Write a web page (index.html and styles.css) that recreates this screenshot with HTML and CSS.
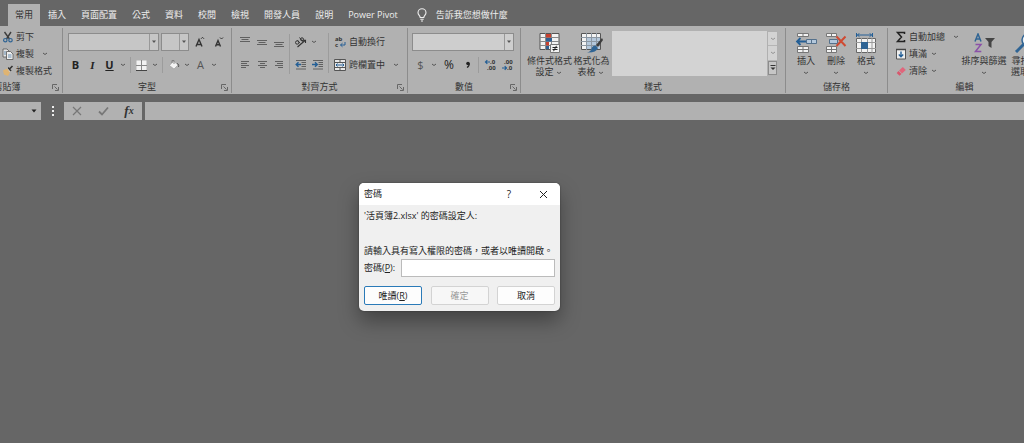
FILE: index.html
```html
<!DOCTYPE html>
<html lang="zh-Hant">
<head>
<meta charset="utf-8">
<title>密碼</title>
<link rel="stylesheet" href="styles.css">
</head>
<body>
<svg class="defs" aria-hidden="true">
  <symbol id="chev" viewBox="0 0 6 4"><path d="M1 1l2 1.500 2-1.500" fill="none" stroke="#555" stroke-width="1"/></symbol>
  <symbol id="tri" viewBox="0 0 6 4"><path d="M1 .5h4L3 3z" fill="#555"/></symbol>
  <symbol id="launch" viewBox="0 0 7 7"><path d="M.5 5V.5H5M2.500 2.500l3 3M6.500 3v3.500H3" fill="none" stroke="#666"/></symbol>
</svg>

<nav class="tabs">
  <button class="tab active">常用</button>
  <button class="tab">插入</button>
  <button class="tab">頁面配置</button>
  <button class="tab">公式</button>
  <button class="tab">資料</button>
  <button class="tab">校閱</button>
  <button class="tab">檢視</button>
  <button class="tab">開發人員</button>
  <button class="tab">說明</button>
  <button class="tab">Power Pivot</button>
  <button class="tab tell">
    <svg width="10" height="14" viewBox="0 0 10 14"><path d="M3.200 9.500C3.200 7.700 1 7 1 4.700a4 4 0 0 1 8 0C9 7 6.800 7.700 6.800 9.500zM3.300 11.300h3.400M4 13h2" fill="none" stroke="#eee" stroke-width="1.100"/></svg>
    告訴我您想做什麼
  </button>
</nav>

<div class="ribbon">
  <section class="group clipboard">
    <div class="body stack">
      <button class="cmd"><svg width="12" height="12" viewBox="0 0 12 12"><path d="M2.500 1l5 7M9 1L4.500 8" stroke="#3c3c3c" stroke-width="1.400" fill="none"/><circle cx="3.300" cy="9.200" r="1.700" fill="none" stroke="#2f6494" stroke-width="1.200"/><circle cx="8.500" cy="9.200" r="1.700" fill="none" stroke="#2f6494" stroke-width="1.200"/></svg>剪下</button>
      <button class="cmd"><svg width="12" height="12" viewBox="0 0 12 12"><path d="M1 1h4l2 2v6H1z" fill="#e4e4e4" stroke="#555" stroke-width=".8"/><path d="M4.500 3.500h4L11 6v5.500H4.500z" fill="#eee" stroke="#555" stroke-width=".8"/><path d="M6 7h3.500M6 9h3.500M2 4h2M2 6h2" stroke="#4475a0" stroke-width=".8"/></svg>複製<svg class="chev far"><use href="#chev"/></svg></button>
      <button class="cmd"><svg width="12" height="12" viewBox="0 0 12 12"><path d="M1 5.500l4-2 3 4-2 3.500-4-1.500z" fill="#dfb472"/><path d="M5 3l1.500-1L9 5.500 8 7z" fill="#eee"/><path d="M6 2.500l3 3.500M7.500 4l3-3" stroke="#333" stroke-width="1.600"/></svg>複製格式</button>
    </div>
    <footer><span>剪貼簿</span><button class="launch" aria-label="剪貼簿"><svg><use href="#launch"/></svg></button></footer>
  </section>

  <section class="group font">
    <div class="body rows">
      <div class="row top">
        <span class="combo wide"><select aria-label="字型"></select><svg><use href="#tri"/></svg></span>
        <span class="combo small"><select aria-label="字型大小"></select><svg><use href="#tri"/></svg></span>
        <button class="ico size" aria-label="放大字型"><svg width="12" height="12" viewBox="0 0 12 12"><path d="M1 10.500L4 3.500l3 7M2.200 8.500h3.600" fill="none" stroke="#333" stroke-width="1.400"/><path d="M6 2.800L7.500 1.300 9 2.800" fill="none" stroke="#333"/></svg></button>
        <button class="ico size" aria-label="縮小字型"><svg width="12" height="12" viewBox="0 0 12 12"><path d="M1.500 10.500L4 4.500l2.500 6M2.500 8.800h3" fill="none" stroke="#333" stroke-width="1.400"/><path d="M6 1.500L7.500 3 9 1.500" fill="none" stroke="#333"/></svg></button>
      </div>
      <div class="row">
        <button class="ico letter b">B</button><button class="ico letter i">I</button><button class="ico letter u">U</button><svg class="chev"><use href="#chev"/></svg>
        <i class="sep"></i>
        <button class="ico" aria-label="框線"><svg width="11" height="11" viewBox="0 0 11 11"><path d="M.5.500h10v10H.500z" fill="#f2f2f2"/><path d="M5.500 0v10M0 5.500h11" stroke="#888"/><path d="M0 10.500h11" stroke="#444"/></svg></button><svg class="chev"><use href="#chev"/></svg>
        <i class="sep"></i>
        <button class="ico" aria-label="填滿色彩"><svg width="12" height="12" viewBox="0 0 12 12"><path d="M5.500 2L10 6 6 10 1.500 6.500z" fill="#f4f4f4" stroke="#999" stroke-width=".6"/><path d="M4 4V1.500h2V5" fill="none" stroke="#777" stroke-width=".8"/><path d="M9 4.500c2 .5 2 2 1.500 3.500" fill="none" stroke="#555"/></svg></button><svg class="chev"><use href="#chev"/></svg>
        <button class="ico letter a">A</button><svg class="chev"><use href="#chev"/></svg>
      </div>
    </div>
    <footer><span>字型</span><button class="launch" aria-label="字型設定"><svg><use href="#launch"/></svg></button></footer>
  </section>

  <section class="group align">
    <div class="body cols">
      <div class="aligns">
        <button class="ico" aria-label="靠上對齊"><svg width="12" height="12" viewBox="0 0 12 12"><path d="M1 1.500h10M2.500 3.500h7M1 5.500h10" stroke="#606060"/></svg></button>
        <button class="ico" aria-label="置中對齊"><svg width="12" height="12" viewBox="0 0 12 12"><path d="M1 4.500h10M2.500 6.500h7M1 8.500h10" stroke="#606060"/></svg></button>
        <button class="ico" aria-label="靠下對齊"><svg width="12" height="12" viewBox="0 0 12 12"><path d="M1 6.500h10M2.500 8.500h7M1 10.500h10" stroke="#606060"/></svg></button>
        <button class="ico" aria-label="靠左對齊"><svg width="12" height="12" viewBox="0 0 12 12"><path d="M2 2.500h8M2 4.500h6M2 6.500h8M2 8.500h5" stroke="#606060"/></svg></button>
        <button class="ico" aria-label="置中"><svg width="12" height="12" viewBox="0 0 12 12"><path d="M2 2.500h9M4 4.500h5M2 6.500h9M4 8.500h5" stroke="#606060"/></svg></button>
        <button class="ico" aria-label="靠右對齊"><svg width="12" height="12" viewBox="0 0 12 12"><path d="M2 2.500h8M4 4.500h6M2 6.500h8M5 8.500h5" stroke="#606060"/></svg></button>
      </div>
      <div class="aligns orient">
        <button class="ico" aria-label="方向"><svg width="13" height="13" viewBox="0 0 13 13"><path d="M3.500 11L11 4.500M11.500 7V4.200H8.500" fill="none" stroke="#333" stroke-width="1.100"/><circle cx="3.200" cy="6.500" r="1.700" fill="none" stroke="#333"/><path d="M3.500 4.200L6 7.300M5.500 1.500L9 5.800" stroke="#333" fill="none"/><circle cx="8" cy="3.300" r="1.500" fill="none" stroke="#333"/></svg></button><svg class="chev"><use href="#chev"/></svg>
        <button class="ico" aria-label="減少縮排"><svg width="12" height="12" viewBox="0 0 12 12"><path d="M1 1.500h10M6.500 3.500H11M6.500 5.500H11M6.500 7.500H11M1 10h10" stroke="#606060"/><path d="M6 5.500H1.500M3.500 3.200L1.200 5.500l2.300 2.300" fill="none" stroke="#245f96" stroke-width="1.400"/></svg></button>
        <button class="ico" aria-label="增加縮排"><svg width="12" height="12" viewBox="0 0 12 12"><path d="M1 1.500h10M6.500 3.500H11M6.500 5.500H11M6.500 7.500H11M1 10h10" stroke="#606060"/><path d="M0 5.500h5M3 3.200l2.300 2.300L3 7.800" fill="none" stroke="#245f96" stroke-width="1.400"/></svg></button>
      </div>
      <div class="merge">
        <button class="cmd"><svg width="12" height="12" viewBox="0 0 12 12"><text x="1" y="5" class="mini">ab</text><text x="1" y="11" class="mini">c</text><path d="M11 6v3H6.500M8.500 7.200L6.500 9l2 1.800" fill="none" stroke="#245f96"/></svg>自動換行</button>
        <button class="cmd"><svg width="12" height="12" viewBox="0 0 12 12"><path d="M.5.500h11v11H.500z" fill="#e8e8e8" stroke="#555"/><path d="M6 0v3M6 9v3M0 3.500h12M0 8.500h12" stroke="#555"/><path d="M2 6h8M3.500 4.500L2 6l1.500 1.500M8.500 4.500L10 6 8.500 7.500" fill="none" stroke="#245f96"/></svg>跨欄置中<svg class="chev"><use href="#chev"/></svg></button>
      </div>
    </div>
    <footer><span>對齊方式</span><button class="launch" aria-label="對齊設定"><svg><use href="#launch"/></svg></button></footer>
  </section>

  <section class="group number">
    <div class="body rows">
      <div class="row top"><span class="combo full"><select aria-label="數值格式"></select><svg><use href="#tri"/></svg></span></div>
      <div class="row">
        <button class="ico letter money">$</button><svg class="chev"><use href="#chev"/></svg>
        <button class="ico letter pct">%</button><button class="ico letter comma" aria-label="千分位樣式"><svg width="6" height="8" viewBox="0 0 6 8"><circle cx="3" cy="2.500" r="1.800" fill="#222"/><path d="M4.200 2.500q.3 2.500-2.200 4" fill="none" stroke="#222" stroke-width="1.200"/></svg></button>
        <i class="sep"></i>
        <button class="ico" aria-label="增加小數位數"><svg width="12" height="12" viewBox="0 0 12 12"><text x="6" y="5" class="mini">.0</text><text x="3" y="11" class="mini">.00</text><path d="M6 3H1.500M3.300 1.200L1.500 3l1.800 1.800" fill="none" stroke="#245f96" stroke-width="1.200"/></svg></button>
        <button class="ico" aria-label="減少小數位數"><svg width="12" height="12" viewBox="0 0 12 12"><text x="3" y="5" class="mini">.00</text><text x="6" y="11" class="mini">.0</text><path d="M1 9h4.500M3.700 7.200L5.500 9l-1.800 1.800" fill="none" stroke="#245f96" stroke-width="1.200"/></svg></button>
      </div>
    </div>
    <footer><span>數值</span><button class="launch" aria-label="數值設定"><svg><use href="#launch"/></svg></button></footer>
  </section>

  <section class="group styles">
    <div class="body cols">
      <button class="big cond"><svg width="22" height="20" viewBox="0 0 22 20"><path d="M1 .5h19v16H1z" fill="#f2f2f2" stroke="#555"/><path d="M1 4.500h19M1 8.500h19M1 12.500h19M6.500 0v17M12.500 0v17" stroke="#888" fill="none"/><path d="M7 1h5v3.500H7z" fill="#c8402f"/><path d="M7 5h6v3.500H7z" fill="#2f5f91"/><path d="M7 9h3v3.500H7z" fill="#c8402f"/><path d="M7 13h3v3H7z" fill="#2f5f91"/><path d="M11.500 11.500h9v8h-9z" fill="#f2f2f2" stroke="#777"/><path d="M13.500 14.500h5M13.500 16.500h5M17.500 12.800l-3 5.400" stroke="#222"/></svg><span>條件式格式<br>設定<svg class="chev"><use href="#chev"/></svg></span></button>
      <button class="big table"><svg width="22" height="20" viewBox="0 0 22 20"><path d="M.5.500h19v16H.500z" fill="#f2f2f2" stroke="#555"/><path d="M6 5h13v11H6z" fill="#b4c8dc"/><path d="M0 4.500h19M0 8.500h19M0 12.500h19M5.500 0v17M10.500 0v17M15.500 0v17" stroke="#8c97a2" fill="none"/><path d="M21 5l-6 7 2 2 5-7z" fill="#3c3c3c"/><path d="M14.500 12.500l2.500 2.500q-2 5-11 4.500 4-1 4.500-4 1-3 4-3z" fill="#2f6494"/></svg><span>格式化為<br>表格<svg class="chev"><use href="#chev"/></svg></span></button>
      <div class="gallery">
        <div class="scroll">
          <button aria-label="上一列"><svg><use href="#chev"/></svg></button>
          <button aria-label="下一列"><svg><use href="#chev"/></svg></button>
          <button class="more" aria-label="其他"><svg viewBox="0 0 6 6"><path d="M.5.500h5" stroke="#333"/><path d="M.5 2.500h5L3 5z" fill="#333"/></svg></button>
        </div>
      </div>
    </div>
    <footer><span>樣式</span></footer>
  </section>

  <section class="group cells">
    <div class="body cols">
      <button class="big"><svg width="22" height="20" viewBox="0 0 22 20"><path d="M2.500.500h11v3h-11zM2.500 13.500h11v6h-11zM8 0v4M8 13v7M2 16.500h12" fill="#f2f2f2" stroke="#777"/><path d="M11.500 6.500h10v4h-10zM16.500 6v5" fill="#b4c8dc" stroke="#55718c"/><path d="M11 8.500H2M5.500 5L2 8.500 5.500 12" fill="none" stroke="#245f96" stroke-width="1.800"/></svg><span>插入<br><svg class="chev"><use href="#chev"/></svg></span></button>
      <button class="big"><svg width="22" height="20" viewBox="0 0 22 20"><path d="M1.500.500h10v3h-10zM1.500 13.500h10v6h-10zM6.500 0v4M6.500 13v7M1 16.500h11" fill="#f2f2f2" stroke="#777"/><path d="M4.500 6.500h8v4h-8z" fill="#b4c8dc" stroke="#55718c"/><path d="M11.500 3.500l9 9.500M20.500 3.500l-9 9.500" fill="none" stroke="#cf4a32" stroke-width="2"/></svg><span>刪除<br><svg class="chev"><use href="#chev"/></svg></span></button>
      <button class="big"><svg width="22" height="20" viewBox="0 0 22 20"><path d="M2 2h15M4.500.200L2.500 2l2 1.800M14.500.200l2 1.800-2 1.800M1.500 0v4M17.500 0v4" fill="none" stroke="#245f96"/><path d="M1.500 5.500h19v14h-19z" fill="#f2f2f2" stroke="#666"/><path d="M1 9.500h20M1 15.500h20M6.500 5v15M12.500 5v15M17 5v15" stroke="#999" fill="none"/><path d="M6 9h7v7H6z" fill="#2f6494"/></svg><span>格式<br><svg class="chev"><use href="#chev"/></svg></span></button>
    </div>
    <footer><span>儲存格</span></footer>
  </section>

  <section class="group edit">
    <div class="body cols">
      <div class="stack">
        <button class="cmd"><svg width="12" height="12" viewBox="0 0 12 12"><path d="M9.500 3V1.500H2.500L6.500 6l-4 4.500h7V9" fill="none" stroke="#222" stroke-width="1.500"/></svg>自動加總<svg class="chev far"><use href="#chev"/></svg></button>
        <button class="cmd"><svg width="12" height="12" viewBox="0 0 12 12"><path d="M1.500 1.500h9v9.500h-9z" fill="#eee" stroke="#555"/><path d="M1 1.500h10" stroke="#444" stroke-width="1.500"/><path d="M6 3.500v5M3.800 6.500L6 8.700l2.200-2.200" fill="none" stroke="#245f96" stroke-width="1.400"/></svg>填滿<svg class="chev"><use href="#chev"/></svg></button>
        <button class="cmd"><svg width="12" height="12" viewBox="0 0 12 12"><path d="M4 5.500L7.800 2l3 3L7 8.500z" fill="#e0667c"/><path d="M3.500 6L6.500 9 4.500 10.700 1.700 8z" fill="#d8566c"/></svg>清除<svg class="chev"><use href="#chev"/></svg></button>
      </div>
      <button class="big sort"><svg width="22" height="20" viewBox="0 0 22 20"><path d="M2 8.500L5 1l3 7.500M3 6h4" fill="none" stroke="#2f6494" stroke-width="1.500"/><path d="M2.500 11.500H8l-5.500 7H8.300" fill="none" stroke="#8a51a8" stroke-width="1.500"/><path d="M12 5h10l-3.500 4v6l-3-2V9z" fill="#444"/></svg><span>排序與篩選<br><svg class="chev"><use href="#chev"/></svg></span></button>
      <button class="big find"><svg width="22" height="20" viewBox="0 0 22 20"><circle cx="14" cy="7" r="6" fill="#e4eaf0" stroke="#2f6494" stroke-width="1.500"/><path d="M9.500 11.500L2 19" stroke="#2f6494" stroke-width="3"/></svg><span>尋找與<br>選取<svg class="chev"><use href="#chev"/></svg></span></button>
    </div>
    <footer><span>編輯</span></footer>
  </section>
</div>

<div class="formula">
  <span class="namebox"><select aria-label="名稱方塊"></select><svg viewBox="0 0 6 4"><path d="M.5.500h5L3 3.500z" fill="#222"/></svg></span>
  <span class="dots"><i></i><i></i><i></i></span>
  <span class="tools">
    <button aria-label="取消輸入"><svg width="10" height="10" viewBox="0 0 10 10"><path d="M1 1l8 8M9 1L1 9" stroke="#777" stroke-width="1.200"/></svg></button>
    <button aria-label="輸入"><svg width="11" height="10" viewBox="0 0 11 10"><path d="M1 5.500l3 3L10 1.500" fill="none" stroke="#777" stroke-width="1.800"/></svg></button>
    <button class="fx">f<small>x</small></button>
  </span>
  <input class="entry" aria-label="資料編輯列">
</div>

<main class="workspace"></main>

<form class="dialog" role="dialog" aria-labelledby="dlg-title">
  <header>
    <span id="dlg-title">密碼</span>
    <button type="button" class="help" aria-label="說明">?</button>
    <button type="button" aria-label="關閉"><svg width="9" height="9" viewBox="0 0 9 9"><path d="M1 1l7 7M8 1L1 8" stroke="#222"/></svg></button>
  </header>
  <div class="content">
    <p class="file">'活頁簿2.xlsx' 的密碼設定人:</p>
    <p>請輸入具有寫入權限的密碼，或者以唯讀開啟。</p>
    <div class="field"><label for="pwd">密碼(<u>P</u>):</label><input id="pwd" type="password"></div>
    <div class="actions">
      <button type="button" class="primary">唯讀(<u>R</u>)</button>
      <button type="button" disabled>確定</button>
      <button type="button">取消</button>
    </div>
  </div>
</form>
</body>
</html>
```

FILE: styles.css
```css
* { box-sizing: border-box; }

body {
  margin: 0;
  min-height: 100vh;
  overflow: hidden;
  background: #666;
  color: #333;
  font-family: "Open Sans", "Noto Sans CJK TC", sans-serif;
  font-size: 9px;
  line-height: 12px;
}

button, input, select {
  margin: 0;
  padding: 0;
  border: 0;
  background: none;
  color: inherit;
  font: inherit;
  line-height: inherit;
  white-space: nowrap;
}

svg { flex: none; }
p { margin: 0; }
.defs { position: absolute; width: 0; height: 0; }

/* Tabs */
.tabs { display: flex; height: 26px; padding: 4px 0 0 8px; }
.tab { padding: 0 7px 0 8px; color: #eee; }
.tab.active { padding: 0 7px; background: #b1b1b1; color: #333; }
.tell { display: flex; align-items: center; gap: 9px; padding-left: 12px; }

/* Ribbon */
.ribbon {
  display: flex;
  height: 68px;
  padding: 2px 0 1px;
  overflow: hidden;
  background: #b1b1b1;
}
.group {
  display: flex;
  flex: none;
  flex-direction: column;
  justify-content: space-between;
  border-right: 1px solid #8c8c8c;
}
.clipboard { width: 115px; margin-left: -52px; }
.font { width: 169px; }
.align { width: 176px; }
.number { width: 113px; }
.styles { width: 265px; }
.cells { width: 102px; }
.edit { width: 154px; }

.group footer { display: flex; height: 12px; }
.group footer span { flex: 1; text-align: center; }
.clipboard footer { padding-left: 4px; }
.launch { width: 10px; margin-left: -10px; }
.launch svg { display: block; width: 7px; height: 7px; margin-top: 1px; }

.body { height: 52px; }
.cols { display: flex; }
.stack { display: flex; flex-direction: column; }
.clipboard .stack { padding-left: 54px; }
.rows { padding: 5px 4px 0; }
.row { display: flex; align-items: center; height: 22px; margin-top: 3px; }
.row.top { height: 18px; margin-top: 0; gap: 2px; }

.cmd { display: flex; align-items: center; gap: 2px; height: 17px; }
.ico { display: flex; flex: none; align-items: center; justify-content: center; width: 17px; height: 16px; }
.chev { width: 6px; height: 4px; margin: 0 2px; vertical-align: middle; }
.chev.far { margin-left: 6px; }
.sep { width: 1px; height: 16px; margin: 0 2px; background: #9c9c9c; }
.mini { fill: #333; font-size: 6px; font-weight: 700; }

.combo { position: relative; display: flex; height: 18px; border: 1px solid #8c8c8c; background: #c6c6c6; }
.combo select { flex: 1; width: 100%; appearance: none; }
.combo svg { width: 9px; height: 100%; padding: 0 1px; border-left: 1px solid #999; }
.wide { width: 92px; margin-left: 1px; }
.small { width: 28px; }
.full { width: 102px; background: #cecece; }
.size { margin-left: 1px; margin-right: -1px; }

.letter { color: #222; font-size: 11px; }
.b { font-weight: 700; }
.i { font-family: "Liberation Serif", serif; font-style: italic; font-weight: 700; }
.u { font-weight: 700; text-decoration: underline; }
.a, .money { color: #555; }
.pct { width: 20px; font-size: 12px; }

.aligns { display: grid; grid-template-columns: repeat(3, 17px); grid-template-rows: 16px 16px; row-gap: 7px; padding: 6px 2px 0 4px; align-content: start; }
.orient { grid-template-columns: 17px 17px; margin-top: 6px; padding: 0 2px; border-left: 1px solid #9c9c9c; align-items: center; height: 40px; }
.merge { display: flex; flex-direction: column; gap: 6px; height: 40px; margin-top: 5px; padding-left: 5px; border-left: 1px solid #9c9c9c; }
.merge .cmd { gap: 3px; }
.merge .chev { margin-left: 5px; }

.big { display: flex; flex: none; flex-direction: column; align-items: center; width: 30px; padding-top: 5px; line-height: 11px; }
.big > span { margin-top: 2px; }
.cells .cols { padding-left: 5px; }
.styles .cols { padding-left: 5px; }
.cond { width: 47px; }
.table { width: 37px; }
.sort { width: 48px; }
.find { width: 34px; }
.edit .cols { padding-left: 7px; }
.edit .stack { width: 65px; }

.gallery { display: flex; flex: 1; justify-content: flex-end; height: 45px; margin: 3px 7px 0 2px; background: #d3d3d3; }
.scroll { display: grid; grid-template-rows: repeat(3, 1fr); width: 11px; border: 1px solid #b0b0b0; }
.scroll button { display: flex; align-items: center; justify-content: center; border-bottom: 1px solid #b5b5b5; }
.scroll svg { width: 6px; height: 6px; opacity: .5; }
.scroll .more { border: 1px solid #8c8c8c; background: #c6c6c6; }
.scroll .more svg { opacity: 1; }

/* Formula bar */
.formula { display: flex; height: 18px; margin-top: 8px; }
.namebox { display: flex; align-items: center; width: 41px; padding-right: 4px; background: #b1b1b1; }
.namebox select { flex: 1; width: 0; appearance: none; }
.namebox svg { width: 6px; height: 4px; }
.dots { display: flex; flex-direction: column; align-items: center; justify-content: center; gap: 2px; width: 23px; }
.dots i { width: 2px; height: 2px; background: #eee; }
.tools { display: flex; width: 78px; background: #b1b1b1; }
.tools button { display: flex; flex: 1; align-items: center; justify-content: center; }
.tools .fx { font-family: "Liberation Serif", serif; font-size: 13px; font-style: italic; font-weight: 700; }
.fx small { font-size: 10px; }
.entry { flex: 1; margin-left: 3px; background: #b1b1b1; }

/* Password dialog */
.dialog {
  position: absolute;
  top: 183px;
  left: 359px;
  width: 201px;
  border-radius: 5px;
  overflow: hidden;
  background: #f0f0f0;
  color: #222;
  box-shadow: 0 10px 20px rgba(0, 0, 0, .35), 0 0 2px rgba(0, 0, 0, .4);
}
.dialog header { display: flex; align-items: center; height: 22px; padding-left: 5px; background: #fff; }
.dialog header span { flex: 1; }
.dialog header button { display: flex; align-items: center; justify-content: center; width: 34px; height: 22px; }
.dialog .help { font-size: 10px; }
.content { padding: 5px 5px 6px; }
.content p { white-space: nowrap; }
.content .file { margin-bottom: 23px; }
.field { display: flex; align-items: center; gap: 6px; height: 18px; margin-top: 2px; }
.field label { flex: none; }
.field input { flex: 1; min-width: 0; height: 18px; border: 1px solid #bbb; background: #fff; }
.actions { display: grid; grid-template-columns: repeat(3, 58px); justify-content: space-between; margin-top: 9px; }
.actions button { height: 19px; border: 1px solid #d3d3d3; border-radius: 2px; background: #fdfdfd; }
.actions .primary { border-color: #2a7ab8; }
.actions button:disabled { background: #f7f7f7; color: #999; }
```
